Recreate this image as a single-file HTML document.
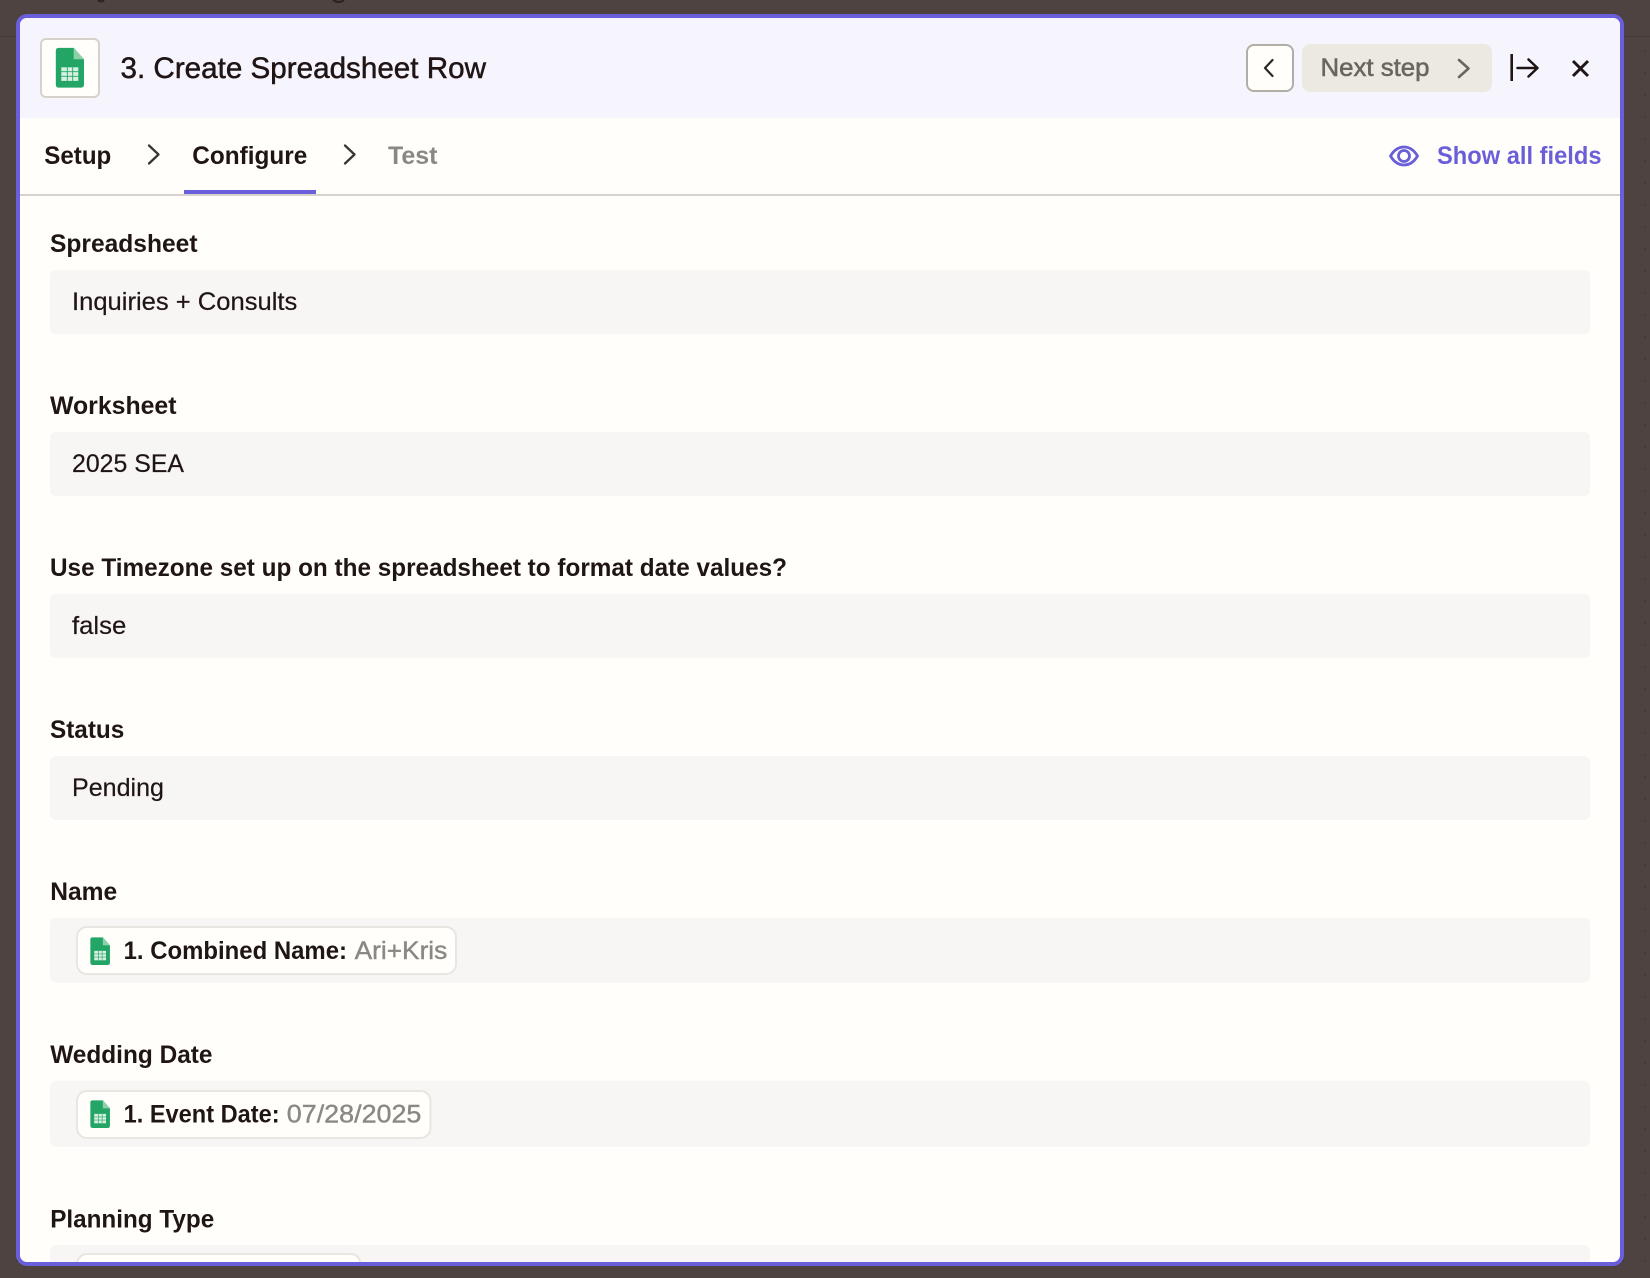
<!DOCTYPE html>
<html lang="en">
<head>
<meta charset="utf-8">
<title>3. Create Spreadsheet Row</title>
<style>
html,body{margin:0;padding:0;width:1650px;height:1278px;overflow:hidden;background:#4e4341}
svg{display:block;filter:blur(.35px)}
text{font-family:"Liberation Sans",Arial,sans-serif;fill:#201515}
.l{font-weight:700;font-size:25px}
.v{font-size:25px;stroke:#201515;stroke-width:.2px}
.n{font-weight:700;font-size:25px}
.g{font-size:25px;fill:#8a8885;stroke:#8a8885;stroke-width:.4px}
.c{fill:none;stroke-linecap:round;stroke-linejoin:round}
</style>
</head>
<body>
<svg width="1650" height="1278" viewBox="0 0 1650 1278" xmlns="http://www.w3.org/2000/svg">
<defs>
<pattern id="dots" x="0" y="0" width="22" height="22" patternUnits="userSpaceOnUse" patternTransform="translate(1634 40)">
<rect x="10" y="10" width="2" height="2" fill="#443a38"/>
</pattern>
<clipPath id="inner"><rect x="20" y="18" width="1600" height="1244" rx="7"/></clipPath>
<symbol id="sheet" viewBox="0 0 28.3 40">
<path d="M3 0H18L28.3 11.6V37a3 3 0 0 1-3 3H3a3 3 0 0 1-3-3V3a3 3 0 0 1 3-3z" fill="#23a566"/>
<path d="M18 0L28.3 11.6H18z" fill="#8ed1a9"/>
<rect x="5.6" y="19.6" width="17" height="13.6" fill="#d8f0e2"/>
<path d="M11.6 19.6V33.2M17 19.6V33.2M5.6 24H22.6M5.6 28.6H22.6" stroke="#23a566" stroke-width=".9" fill="none"/>
</symbol>
</defs>

<rect width="1650" height="1278" fill="#4e4341"/>
<rect y="36" width="1650" height="1242" fill="url(#dots)"/>
<rect y="36" width="1650" height="1" fill="#433a38"/>
<path d="M98 0q3 3 6 0M333 0q6 4 11 0" fill="none" stroke="#2a2220" stroke-width="2"/>

<!-- Modal -->
<rect x="16" y="14" width="1608" height="1252" rx="11" fill="#6a5fdb"/>
<g clip-path="url(#inner)">
<rect x="20" y="18" width="1600" height="1244" fill="#fffefb"/>
<rect x="20" y="18" width="1600" height="100" fill="#f6f5fe"/>

<!-- Header -->
<rect x="41" y="39" width="58" height="58" rx="5" fill="#fffefb" stroke="#d7d2c9" stroke-width="2"/>
<use href="#sheet" x="55.7" y="47.7" width="28.3" height="40"/>
<text x="120.5" y="78" font-size="30" textLength="365.5" lengthAdjust="spacingAndGlyphs" stroke="#201515" stroke-width=".5">3. Create Spreadsheet Row</text>

<rect x="1247" y="45" width="46" height="46" rx="7" fill="#fffefb" stroke="#b0aea5" stroke-width="2"/>
<path class="c" d="M1272.5 60L1265 68L1272.5 76" stroke="#2d2826" stroke-width="2.2"/>
<rect x="1302" y="44" width="190" height="48" rx="8" fill="#ece9e1"/>
<text x="1320.5" y="76" font-size="25" textLength="109" lengthAdjust="spacingAndGlyphs" style="fill:#69665f" stroke="#69665f" stroke-width=".55">Next step</text>
<path class="c" d="M1459 60L1468.5 68.5L1459 77" stroke="#69665f" stroke-width="2.6"/>
<path d="M1511.7 54V81" stroke="#201515" stroke-width="2.6" fill="none"/>
<path class="c" d="M1517.5 68H1537M1528.5 59.5L1537.5 68L1528.5 76.5" stroke="#201515" stroke-width="2.5"/>
<path d="M1573 61L1588 76M1588 61L1573 76" stroke="#201515" stroke-width="3" fill="none"/>

<!-- Tabs -->
<text class="n" x="44.3" y="164" textLength="67" lengthAdjust="spacingAndGlyphs">Setup</text>
<path class="c" d="M149 145.5L158.5 154.5L149 163.5" stroke="#3a3432" stroke-width="2.3"/>
<text class="n" x="192.3" y="164" textLength="115" lengthAdjust="spacingAndGlyphs">Configure</text>
<path class="c" d="M345 145.5L354.5 154.5L345 163.5" stroke="#3a3432" stroke-width="2.3"/>
<text class="n" x="388" y="164" textLength="49.5" lengthAdjust="spacingAndGlyphs" style="fill:#8a8885">Test</text>

<path class="c" d="M1390.5 156C1394 150 1398.5 147 1404 147C1409.5 147 1414 150 1417.5 156C1414 162 1409.5 165 1404 165C1398.5 165 1394 162 1390.5 156Z" stroke="#6a5fd8" stroke-width="2.8"/>
<circle cx="1404" cy="156" r="5.5" fill="none" stroke="#6a5fd8" stroke-width="2.8"/>
<text class="n" x="1437" y="164" textLength="164.5" lengthAdjust="spacingAndGlyphs" style="fill:#6a5fd8">Show all fields</text>

<rect x="20" y="194" width="1600" height="2" fill="#d7d2cb"/>
<rect x="184" y="190" width="132" height="4" fill="#6a5fdb"/>

<!-- Fields -->
<g fill="#f7f6f4">
<rect x="50" y="270" width="1540" height="64" rx="6"/>
<rect x="50" y="432" width="1540" height="64" rx="6"/>
<rect x="50" y="594" width="1540" height="64" rx="6"/>
<rect x="50" y="756" width="1540" height="64" rx="6"/>
<rect x="50" y="917.7" width="1540" height="65" rx="6"/>
<rect x="50" y="1080.7" width="1540" height="66" rx="6"/>
<rect x="50" y="1245" width="1540" height="60" rx="6"/>
</g>

<text class="l" x="50" y="252" textLength="147.5" lengthAdjust="spacingAndGlyphs">Spreadsheet</text>
<text class="v" x="72" y="310" textLength="225.3" lengthAdjust="spacingAndGlyphs">Inquiries + Consults</text>

<text class="l" x="50" y="414" textLength="126.5" lengthAdjust="spacingAndGlyphs">Worksheet</text>
<text class="v" x="72" y="472" textLength="112" lengthAdjust="spacingAndGlyphs">2025 SEA</text>

<text class="l" x="50" y="576" textLength="737" lengthAdjust="spacingAndGlyphs">Use Timezone set up on the spreadsheet to format date values?</text>
<text class="v" x="72" y="634" textLength="54.3" lengthAdjust="spacingAndGlyphs">false</text>

<text class="l" x="50" y="738" textLength="74.3" lengthAdjust="spacingAndGlyphs">Status</text>
<text class="v" x="72" y="796" textLength="92" lengthAdjust="spacingAndGlyphs">Pending</text>

<text class="l" x="50.2" y="900" textLength="67" lengthAdjust="spacingAndGlyphs">Name</text>
<rect x="77" y="927" width="379" height="47" rx="10" fill="#fffefb" stroke="#e8e6e0" stroke-width="2"/>
<use href="#sheet" x="90" y="937.3" width="20.3" height="27.7"/>
<text class="n" x="123.6" y="959" textLength="223.4" lengthAdjust="spacingAndGlyphs">1. Combined Name:</text>
<text class="g" x="354.6" y="959" textLength="92.7" lengthAdjust="spacingAndGlyphs">Ari+Kris</text>

<text class="l" x="50.2" y="1063" textLength="162.3" lengthAdjust="spacingAndGlyphs">Wedding Date</text>
<rect x="77" y="1091" width="353.5" height="47" rx="10" fill="#fffefb" stroke="#e8e6e0" stroke-width="2"/>
<use href="#sheet" x="90" y="1100.3" width="20.3" height="27.7"/>
<text class="n" x="123.6" y="1122.4" textLength="156" lengthAdjust="spacingAndGlyphs">1. Event Date:</text>
<text class="g" x="286.8" y="1122.4" textLength="134.6" lengthAdjust="spacingAndGlyphs">07/28/2025</text>

<text class="l" x="50.2" y="1227.4" textLength="164" lengthAdjust="spacingAndGlyphs">Planning Type</text>
<rect x="77" y="1254" width="283.5" height="47" rx="10" fill="#fffefb" stroke="#e8e6e0" stroke-width="2"/>
</g>
</svg>
</body>
</html>
